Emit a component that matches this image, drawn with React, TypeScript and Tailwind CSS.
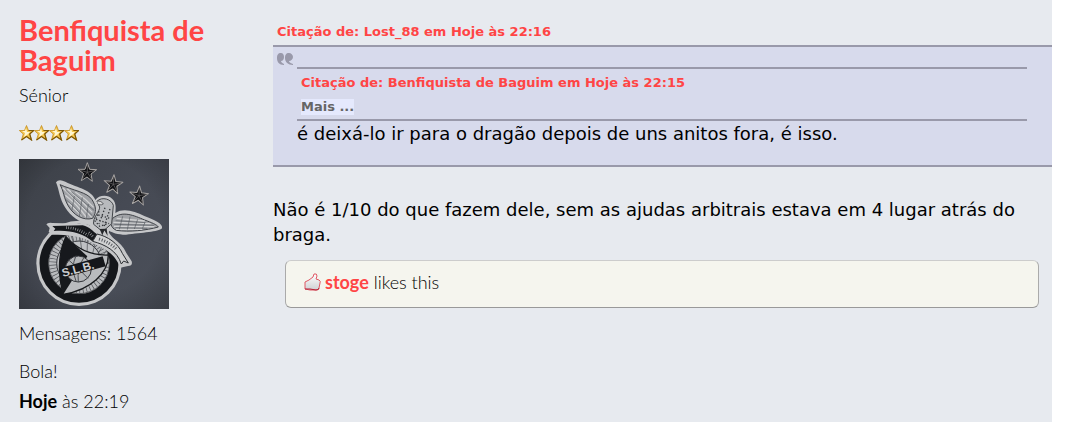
import React from 'react';

const RankStars: React.FC<{ count: number }> = ({ count }) => (
  <div className="flex" role="img" aria-label={`${count} estrelas`}>
    {Array.from({ length: count }, (_, i) => (
      <svg key={i} viewBox="0 0 15 16" className="h-4 w-[15px]">
        <path d="M7.5.5 9.5 5.5H14.7L10.7 9 12.5 15 7.5 11.5 2.5 15 4.3 9 .3 5.5H5.5Z" fill="#f3c44a" stroke="#c48f22" strokeWidth="0.8" />
        <path d="M7 3 8 7l3 0-3 3-3 2 1-4-3-2 3 0Z" fill="#fff6cf" />
        <path d="M9.5 5.5H14.7L10.7 9 12.5 15 7.5 11.5 2.5 15" fill="none" stroke="#7d5808" strokeWidth="1.2" />
      </svg>
    ))}
  </div>
);

const STITCHED_STAR = 'M0-29 7-9 28-8 11 5 15 27-1 14-18 25-11 4-28-9-7-9Z';

// Embroidered club crest on dark cloth
const Avatar: React.FC = () => (
  <svg viewBox="12 12 450 450" className="block size-[150px]" role="img" aria-label="Avatar">
    <defs>
      <linearGradient id="cloth" x1="0" y1="0" x2="1" y2="1">
        <stop offset="0" stopColor="#3c4047" />
        <stop offset="0.5" stopColor="#464a54" />
        <stop offset="1" stopColor="#4b505a" />
      </linearGradient>
      <radialGradient id="shade" cx="0.5" cy="0.45" r="0.75">
        <stop offset="0.6" stopColor="#000" stopOpacity="0" />
        <stop offset="1" stopColor="#000" stopOpacity="0.25" />
      </radialGradient>
      <clipPath id="shield">
        <path d="M153 245C182 278 226 302 280 300 280 354 228 405 145 418 127 356 130 292 153 245Z" />
      </clipPath>
    </defs>
    <rect x="12" y="12" width="450" height="450" fill="url(#cloth)" />
    <rect x="12" y="12" width="450" height="450" fill="url(#shade)" />

    <g fill="#101114" stroke="#a9a6a4" strokeWidth="3" strokeLinejoin="round">
      <path d={STITCHED_STAR} transform="translate(217 52)" />
      <path d={STITCHED_STAR} transform="translate(295 88) rotate(4)" />
      <path d={STITCHED_STAR} transform="translate(372 122) rotate(4)" />
    </g>
    <g fill="none" stroke="#6d6a6b" strokeWidth="2">
      <path d="m217 52 0-24M217 52l24-6M217 52l14 22M217 52l-16 20M217 52l-24-7" />
      <path d="m295 88 1-24M295 88l24-4M295 88l12 23M295 88l-17 19M295 88l-23-9" />
      <path d="m372 122 1-24M372 122l24-4M372 122l12 23M372 122l-17 19M372 122l-23-9" />
    </g>

    {/* badge base */}
    <circle cx="192" cy="325" r="128" fill="#c5c6c8" />
    <circle cx="192" cy="325" r="105" fill="none" stroke="#15171b" strokeWidth="27" />
    <circle cx="192" cy="325" r="91" fill="#b9bbbe" stroke="#24262a" strokeWidth="2" />
    <circle cx="192" cy="325" r="79" fill="none" stroke="#4c4e53" strokeWidth="21" strokeDasharray="2 8" />
    <circle cx="192" cy="325" r="67" fill="#bfc1c4" stroke="#303237" strokeWidth="3" />
    <path
      d="m190 305-22-64M203 305l-10-72M216 306l2-72M230 308l16-67M244 307l25-48M255 309l25-27"
      stroke="#44474b"
      strokeWidth="2"
    />
    <path
      d="M153 245C182 278 226 302 280 300 280 354 228 405 145 418 127 356 130 292 153 245Z"
      fill="#b9bbbe"
      stroke="#17191c"
      strokeWidth="4"
    />
    <g clipPath="url(#shield)">
      <path d="M153 245 217 304 145 418 105 340Z" fill="#17191d" />
      <circle cx="190" cy="342" r="39" fill="#b4b6b9" stroke="#303237" strokeWidth="3" />
      <path d="M161 315q31 26 58 55M183 302q-17 36 1 79M207 307q-22 33-17 74M153 345q36-15 73-12" fill="none" stroke="#4b4e52" strokeWidth="3" />
    </g>
    <path d="m133 340 130-36 9 30-129 35Z" fill="#15171b" />
    <text x="144" y="366" transform="rotate(-15 144 366)" fill="#cdced0" fontFamily="Liberation Sans" fontSize="35" fontWeight="700">
      S.L.B.
    </text>

    {/* eagle */}
    <path
      d="M123 82Q131 70 151 80C190 99 231 105 241 135 250 121 278 117 292 132 305 144 302 163 301 174 326 158 359 169 388 183 419 195 446 207 441 220 430 231 382 233 333 239 307 239 291 232 282 227L281 247 229 229 224 207C191 202 169 186 150 157 134 132 133 106 123 82Z"
      fill="#c6c7c9"
    />
    <g fill="#a0a2a6" stroke="#404348" strokeWidth="3">
      <path d="M135 89C173 106 218 112 231 134 244 154 245 172 233 190 204 198 176 180 160 153 145 128 147 108 135 89Z" />
      <path d="M293 190C322 166 356 181 389 195 410 203 426 209 430 216 394 226 343 232 304 226 286 218 284 201 293 190Z" />
    </g>
    <g fill="none" stroke="#d0d1d2" strokeWidth="4">
      <path d="M143 98q41 39 87 89M151 121q34 26 64 67M160 143q22 21 42 41M157 101q40 32 75 71M181 111q31 20 55 46" />
      <path d="m297 214 121 1M295 202l112 4M305 190l84 8M303 223l79 0" />
    </g>
    <g fill="none" stroke="#565a60" strokeWidth="2">
      <path d="M152 105q39 38 80 77M169 110q38 31 68 56M153 134q25 18 51 51M178 123l-7 42M202 127l-9 58M220 147l-6 42" />
      <path d="m298 208 119 3M302 197l89 6M301 218l96 2M323 184l-10 39M345 185l-8 39M368 193l-10 29M390 202l-8 19" />
    </g>
    <path d="M246 139C261 123 290 133 295 151L290 206 263 230 236 208C232 187 255 170 254 156Z" fill="#b8babd" stroke="#424549" strokeWidth="3" />
    <path d="M245 139q14-3 20 8-6 4-13 2" fill="#d5d5d5" stroke="#34373b" strokeWidth="2" />
    <path d="m252 169-12 29 14 16 28-9M270 158l-18 49M285 162l-19 55M250 180l38 11M243 193l39 13" fill="none" stroke="#35383c" strokeWidth="4" strokeDasharray="4 6" />

    {/* motto ribbon */}
    <path
      d="M94 208Q98 202 112 204L211 206Q231 211 250 229C277 238 318 257 334 294L350 319Q354 333 339 333L316 338 308 322C292 292 262 277 232 264 203 242 157 239 112 239L101 231 104 219Z"
      fill="#c5c6c8"
    />
    <path d="m112 213 91-2C225 216 232 229 248 239L232 259C205 235 164 224 116 228L121 221Z" fill="#17191d" />
    <path d="M246 237C278 244 309 265 322 295L340 324 326 318 319 327C306 287 271 269 233 259Z" fill="#d0d1d2" stroke="#2d3034" strokeWidth="3" />
    <path d="M153 218q34 0 66 23M222 232l12 13" fill="none" stroke="#a9abae" strokeWidth="8" strokeDasharray="2 5" />
    <path d="M252 252q33 10 52 31" fill="none" stroke="#55585e" strokeWidth="9" strokeDasharray="3 5" />
    <path d="m254 222 8 19 6-15 10 17-3-22" fill="#24262a" />
  </svg>
);

const QuoteMark: React.FC = () => (
  <svg viewBox="0 0 16 13" className="h-[13px] w-4" aria-hidden="true">
    <g fill="#9999aa">
      <path d="M4 0C1 0 0 2 0 5c0 4 2 7 7 7v-1C5 10 4 9 4 8c2 0 3-2 3-4S6 0 4 0Z" />
      <path d="M12 0C9 0 8 2 8 5c0 4 3 7 8 7v-1c-3-1-4-2-4-3 2 0 4-2 4-4s-2-4-4-4Z" />
    </g>
  </svg>
);

const ThumbUp: React.FC = () => (
  <svg viewBox="0 0 17 18" className="mr-1 h-[18px] w-[17px]" aria-hidden="true">
    <defs>
      <linearGradient id="thumb" x1="0" y1="0" x2="0" y2="1">
        <stop offset="0" stopColor="#fff" />
        <stop offset="1" stopColor="#cfd1d4" />
      </linearGradient>
    </defs>
    <path
      d="M1 9 5 7 9 4 10 1Q13 0 13 3L12 6 15 7Q17 8 16 10L15 15Q15 17 12 17H6L1 16Z"
      fill="url(#thumb)"
      stroke="#df5965"
      strokeWidth="1"
    />
    <path d="M1 16h5l6 1q3 0 3-2" fill="none" stroke="#b62036" strokeWidth="1" />
  </svg>
);

const Poster: React.FC = () => (
  <aside className="w-[254px] shrink-0 pt-[15px] pr-8 text-[18px] font-light">
    <h4 className="text-[29px] leading-[30px] font-bold text-[#ff4545]">
      <a href="#perfil">Benfiquista de Baguim</a>
    </h4>
    <ul>
      <li className="mt-2 leading-6">Sénior</li>
      <li className="mt-[18px]">
        <RankStars count={4} />
      </li>
      <li className="mt-[18px]">
        <a href="#perfil">
          <Avatar />
        </a>
      </li>
      <li className="mt-3 leading-6">Mensagens: 1564</li>
      <li className="mt-[14px] leading-6">Bola!</li>
      <li className="mt-[6px] leading-6">
        <strong className="font-bold">Hoje</strong> às 22:19
      </li>
    </ul>
  </aside>
);

const Post: React.FC = () => (
  <div className="min-w-0 flex-1 pt-[23px] font-['DejaVu_Sans',sans-serif] text-[18px] leading-[25px]">
    <div className="pl-1 text-[13px] leading-[18px] font-bold text-[#ff4545]">
      <a href="#citacao">Citação de: Lost_88 em Hoje às 22:16</a>
    </div>
    <blockquote className="mt-1 flex border-y-2 border-[#9999aa] bg-[#d7daec] pr-[25px] pb-[19px]">
      <div className="w-6 shrink-0 pt-[6px] pl-1">
        <QuoteMark />
      </div>
      <div className="min-w-0 flex-1 pt-5">
        <div className="flex flex-col items-start gap-[7px] border-y-2 border-[#9999aa] px-1 pt-[5px] pb-1 text-[13px] leading-4 font-bold">
          <a href="#citacao" className="leading-[18px] text-[#ff4545]">
            Citação de: Benfiquista de Baguim em Hoje às 22:15
          </a>
          <a href="#mais" className="bg-[#e5e9fd] text-[#666666]">
            Mais ...
          </a>
        </div>
        <p>é deixá-lo ir para o dragão depois de uns anitos fora, é isso.</p>
      </div>
    </blockquote>
    <p className="mt-[30px] pr-6">
      Não é 1/10 do que fazem dele, sem as ajudas arbitrais estava em 4 lugar atrás do braga.
    </p>
    <div className="mt-[13px] mr-[13px] ml-3 flex h-12 items-center rounded-md border border-t-[#cccccc] border-r-[#aaaaaa] border-b-[#999999] border-l-[#aaaaaa] bg-[#f5f5ee] px-[18px] pb-1 font-['Lato',sans-serif] text-[18px] font-light">
      <ThumbUp />
      <span>
        <a href="#stoge" className="font-bold text-[#ff4545]">stoge</a> likes this
      </span>
    </div>
  </div>
);

export default function App() {
  return (
    <div className="min-h-screen bg-white pr-4 font-['Lato',sans-serif] text-black">
      <article className="flex min-h-screen bg-[#e7eaef] pl-[19px]">
        <Poster />
        <Post />
      </article>
    </div>
  );
}
